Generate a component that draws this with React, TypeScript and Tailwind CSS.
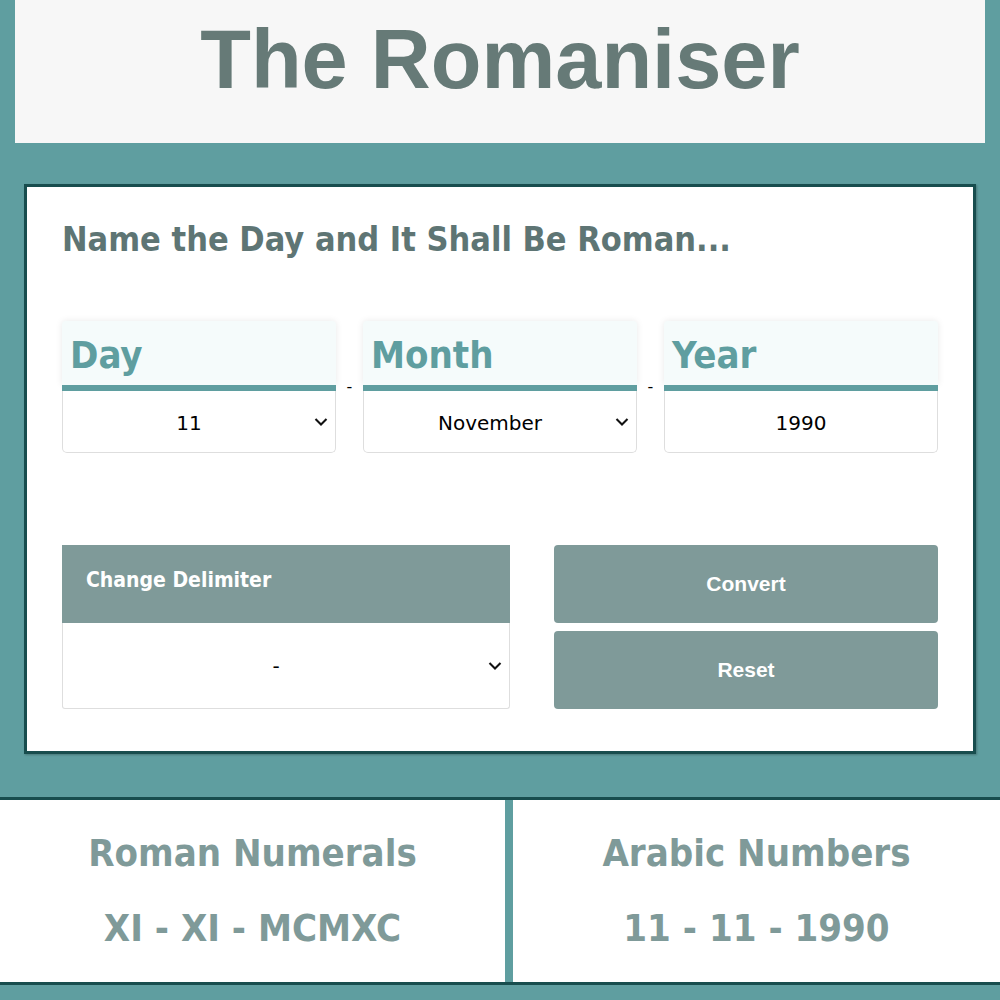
import React, { useState } from 'react';

const MONTHS = [
  'January', 'February', 'March', 'April', 'May', 'June',
  'July', 'August', 'September', 'October', 'November', 'December',
];

function Chevron() {
  return (
    <svg
      width="14"
      height="9"
      viewBox="0 0 14 9"
      className="pointer-events-none absolute right-[7px] top-1/2 -translate-y-1/2"
    >
      <path d="M1.5 1.6 7 7l5.5-5.4" fill="none" stroke="#111" strokeWidth="2.1" />
    </svg>
  );
}

function DateField({ label, children }: { label: string; children: React.ReactNode }) {
  return (
    <div className="flex-1 flex flex-col">
      <div className="h-[64px] bg-[#f5fbfb] rounded-t-[4px] shadow-[0_0_7px_rgba(0,0,0,0.09)] pl-[8px] flex items-center">
        <span className="font-['DejaVu_Sans_Condensed','DejaVu_Sans',sans-serif] font-bold text-[38px] leading-none text-[#5f9ea0] pt-[4px]">
          {label}
        </span>
      </div>
      <div className="h-[6px] bg-[#5f9ea0]" />
      <div className="relative h-[62px] bg-white border border-t-0 border-[#dedede] rounded-b-[5px] pt-[3px]">
        {children}
      </div>
    </div>
  );
}

function Dash() {
  return (
    <div className="w-[27px] flex items-center justify-center text-[16px] text-black font-['DejaVu_Sans',sans-serif]">
      -
    </div>
  );
}

const selectCls =
  "appearance-none w-full h-full bg-transparent text-center [text-align-last:center] pr-[20px] text-[20px] text-black outline-none font-['DejaVu_Sans',sans-serif] cursor-pointer";

export default function App() {
  const [day, setDay] = useState('11');
  const [month, setMonth] = useState('November');
  const [year, setYear] = useState('1990');
  const [delim, setDelim] = useState('-');

  return (
    <div className="w-[1000px] h-[1000px] bg-[#5f9ea0] overflow-hidden flex flex-col">
      <header className="mx-[15px] h-[143px] bg-[#f7f7f7] flex justify-center pt-[10px] shrink-0">
        <h1 className="font-['Liberation_Sans',Arial,sans-serif] font-bold text-[83px] leading-[100px] text-[#667a77]">
          The Romaniser
        </h1>
      </header>

      <main className="mt-[41px] mx-[24px] h-[570px] shrink-0 bg-white border-[3px] border-[#184d4e] shadow-[1px_1px_2px_rgba(0,0,0,0.25)] px-[35px] pt-[30px]">
        <h2 className="font-['DejaVu_Sans_Condensed','DejaVu_Sans',sans-serif] font-bold text-[34px] leading-[44px] text-[#5e7574]">
          Name the Day and It Shall Be Roman...
        </h2>

        <div className="mt-[60px] flex">
          <DateField label="Day">
            <select className={selectCls} value={day} onChange={(e) => setDay(e.target.value)}>
              {Array.from({ length: 31 }, (_, i) => String(i + 1)).map((d) => (
                <option key={d} value={d}>{d}</option>
              ))}
            </select>
            <Chevron />
          </DateField>
          <Dash />
          <DateField label="Month">
            <select className={selectCls} value={month} onChange={(e) => setMonth(e.target.value)}>
              {MONTHS.map((m) => (
                <option key={m} value={m}>{m}</option>
              ))}
            </select>
            <Chevron />
          </DateField>
          <Dash />
          <DateField label="Year">
            <input
              className="w-full h-full bg-transparent text-center text-[20px] text-black outline-none font-['DejaVu_Sans',sans-serif]"
              value={year}
              onChange={(e) => setYear(e.target.value)}
            />
          </DateField>
        </div>

        <div className="mt-[92px] flex gap-[44px]">
          <div className="w-[448px] flex flex-col">
            <div className="h-[78px] bg-[#7f9a99] flex items-center pl-[24px] pb-[6px]">
              <span className="font-['DejaVu_Sans_Condensed','DejaVu_Sans',sans-serif] font-bold text-[21px] text-white">
                Change Delimiter
              </span>
            </div>
            <div className="relative h-[86px] bg-white border border-t-0 border-[#dedede] rounded-b-[3px]">
              <select className={selectCls} value={delim} onChange={(e) => setDelim(e.target.value)}>
                <option value="-">-</option>
                <option value="/">/</option>
                <option value=".">.</option>
                <option value=" "> </option>
              </select>
              <Chevron />
            </div>
          </div>
          <div className="flex-1 flex flex-col gap-[8px]">
            <button className="h-[78px] rounded-[4px] bg-[#7f9a99] text-white font-['Liberation_Sans',Arial,sans-serif] font-bold text-[21px]">
              Convert
            </button>
            <button className="h-[78px] rounded-[4px] bg-[#7f9a99] text-white font-['Liberation_Sans',Arial,sans-serif] font-bold text-[21px]">
              Reset
            </button>
          </div>
        </div>
      </main>

      <section className="mt-[43px] h-[188px] shrink-0 border-y-[3px] border-[#184d4e] flex gap-[8px]">
        <div className="w-[505px] bg-white flex flex-col items-center pt-[31px] gap-[31px] font-['DejaVu_Sans_Condensed','DejaVu_Sans',sans-serif] font-bold text-[38px] leading-[44px] text-[#7f9a99]">
          <div>Roman Numerals</div>
          <div>XI {delim} XI {delim} MCMXC</div>
        </div>
        <div className="flex-1 bg-white flex flex-col items-center pt-[31px] gap-[31px] font-['DejaVu_Sans_Condensed','DejaVu_Sans',sans-serif] font-bold text-[38px] leading-[44px] text-[#7f9a99]">
          <div>Arabic Numbers</div>
          <div>{day} {delim} 11 {delim} {year}</div>
        </div>
      </section>
    </div>
  );
}
